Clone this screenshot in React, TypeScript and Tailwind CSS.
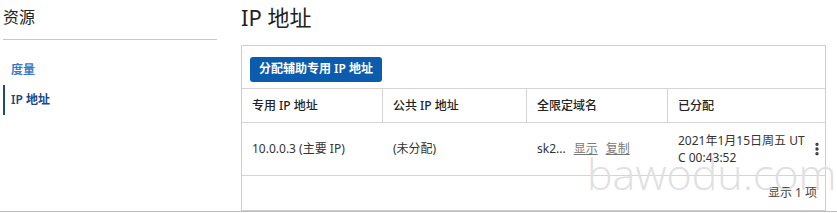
import { EllipsisVertical } from "lucide-react";

const font = { fontFamily: '"Noto Sans", "Noto Sans CJK SC", sans-serif' };

function Sidebar() {
  return (
    <aside className="w-[214px] shrink-0">
      <h2 className="h-[40px] pt-[5px] text-[16px] leading-[24px] text-[#222] border-b border-[#c8c8c8]">
        资源
      </h2>
      <nav className="mt-[15px] flex flex-col text-[12px] font-semibold">
        <a className="h-[30px] flex items-center pl-[8px] text-[#3a78c9]">度量</a>
        <a className="h-[30px] flex items-center pl-[6px] border-l-2 border-[#1d4a7c] text-[#1d4a7c]">
          IP 地址
        </a>
      </nav>
    </aside>
  );
}

function HeaderCell({ children, last }: { children: React.ReactNode; last?: boolean }) {
  return (
    <div
      className={
        "h-[33px] flex items-center px-[10px] text-[12px] font-medium text-[#222] " +
        (last ? "" : "border-r border-[#d4d4d4]")
      }
    >
      {children}
    </div>
  );
}

function IpTable() {
  return (
    <div className="relative border border-[#cfcfcf] h-[166px] flex flex-col">
      <div className="h-[43px] pt-[9px] pl-[8px] border-b border-[#d4d4d4]">
        <button className="h-[25px] px-[9px] rounded-[3px] bg-[#0b5cad] text-white text-[12px] font-semibold leading-none">
          分配辅助专用 IP 地址
        </button>
      </div>
      <div className="grid grid-cols-[141px_144px_141px_1fr] border-b border-[#d4d4d4]">
        <HeaderCell>专用 IP 地址</HeaderCell>
        <HeaderCell>公共 IP 地址</HeaderCell>
        <HeaderCell>全限定域名</HeaderCell>
        <HeaderCell last>已分配</HeaderCell>
      </div>
      <div className="grid grid-cols-[141px_144px_141px_1fr] h-[53px] border-b border-[#d4d4d4] text-[12px] text-[#333]">
        <div className="flex items-center px-[10px]">10.0.0.3 (主要 IP)</div>
        <div className="flex items-center px-[10px]">(未分配)</div>
        <div className="flex items-center px-[10px] gap-[8px]">
          <span>sk2...</span>
          <a className="underline text-[#777]">显示</a>
          <a className="underline text-[#777]">复制</a>
        </div>
        <div className="flex items-center pl-[10px]">
          <span className="flex-1 leading-[17px]">
            2021年1月15日周五 UT
            <br />C 00:43:52
          </span>
          <EllipsisVertical size={16} strokeWidth={3} className="text-[#333]" />
        </div>
      </div>
      <div className="flex-1 flex items-center justify-end pr-[8px] text-[12px] text-[#444]">
        显示 1 项
      </div>
      <span
        className="absolute left-[345px] top-[106px] text-[43px] leading-none text-[#e0e0e0] pointer-events-none"
        style={{ fontFamily: '"Open Sans", "Liberation Sans", sans-serif', fontWeight: 300 }}
      >
        bawodu.com
      </span>
    </div>
  );
}

export default function App() {
  return (
    <div className="w-[837px] h-[212px] bg-white border-b border-[#bdbdbd] flex pl-[3px] gap-[24px]" style={font}>
      <Sidebar />
      <main className="w-[585px]">
        <h1 className="h-[45px] pt-[3px] text-[22px] leading-[28px] text-[#222]">IP 地址</h1>
        <IpTable />
      </main>
    </div>
  );
}
